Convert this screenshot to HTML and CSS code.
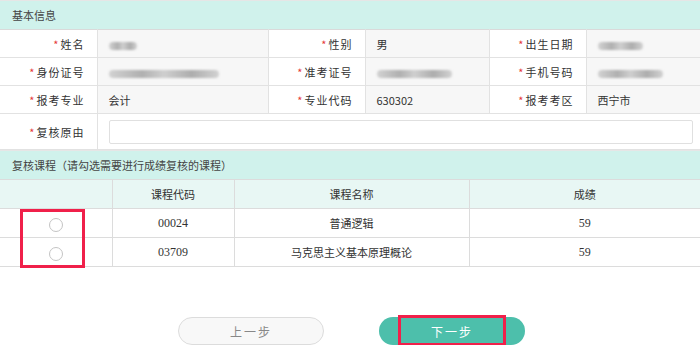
FILE: index.html
```html
<!DOCTYPE html>
<html lang="zh">
<head>
  <meta charset="UTF-8">
  <title>成绩复核申请</title>
  <link rel="stylesheet" href="styles.css">
</head>
<body>
  <div class="title">基本信息</div>
  <table class="info">
    <colgroup>
      <col class="c-l"><col class="c-v1"><col class="c-l"><col class="c-v2"><col class="c-l"><col>
    </colgroup>
    <tr>
      <td class="lbl"><i>*</i>姓名</td>
      <td class="val"><span class="blur w30"></span></td>
      <td class="lbl"><i>*</i>性别</td>
      <td class="val">男</td>
      <td class="lbl"><i>*</i>出生日期</td>
      <td class="val"><span class="blur w45"></span></td>
    </tr>
    <tr>
      <td class="lbl"><i>*</i>身份证号</td>
      <td class="val"><span class="blur w110"></span></td>
      <td class="lbl"><i>*</i>准考证号</td>
      <td class="val"><span class="blur w75"></span></td>
      <td class="lbl"><i>*</i>手机号码</td>
      <td class="val"><span class="blur w65"></span></td>
    </tr>
    <tr>
      <td class="lbl"><i>*</i>报考专业</td>
      <td class="val">会计</td>
      <td class="lbl"><i>*</i>专业代码</td>
      <td class="val">630302</td>
      <td class="lbl"><i>*</i>报考考区</td>
      <td class="val">西宁市</td>
    </tr>
    <tr class="reason">
      <td class="lbl"><i>*</i>复核原由</td>
      <td colspan="5"><input type="text" class="reason-input"></td>
    </tr>
  </table>

  <div class="title">复核课程（请勾选需要进行成绩复核的课程）</div>
  <div class="course-wrap">
    <table class="courses">
      <colgroup>
        <col class="k0"><col class="k1"><col class="k2"><col>
      </colgroup>
      <tr class="head">
        <th></th>
        <th>课程代码</th>
        <th>课程名称</th>
        <th>成绩</th>
      </tr>
      <tr>
        <td><span class="radio"></span></td>
        <td class="num">00024</td>
        <td>普通逻辑</td>
        <td class="num">59</td>
      </tr>
      <tr>
        <td><span class="radio"></span></td>
        <td class="num">03709</td>
        <td>马克思主义基本原理概论</td>
        <td class="num">59</td>
      </tr>
    </table>
    <div class="mark mark-radios"></div>
  </div>

  <div class="actions">
    <button class="btn btn-prev">上一步</button>
    <button class="btn btn-next">下一步<span class="mark mark-next"></span></button>
  </div>
</body>
</html>
```

FILE: styles.css
```css
body {
  margin: 0;
  font-family: "Noto Sans CJK SC", "Noto Sans", sans-serif;
  font-size: 11px;
  color: #333;
  background: #fff;
}
.title {
  height: 28px;
  line-height: 28px;
  padding-left: 12px;
  background: #d0f2ec;
  border-top: 1px solid #e6e6e6;
  color: #444;
}
table {
  width: 700px;
  border-collapse: collapse;
  table-layout: fixed;
}
.info td {
  height: 27px;
  padding: 0;
  border: 1px solid #e2e2e2;
}
.info tr:first-child td { border-top-color: #dadada; }
.info td:first-child { border-left: none; }
.info td:last-child { border-right: none; }
.c-l { width: 97px; }
.c-v1 { width: 171px; }
.c-v2 { width: 124px; }
.lbl {
  text-align: right;
  padding-right: 12px !important;
  background: #fff;
  letter-spacing: 1px;
}
.lbl i {
  font-style: normal;
  color: #e53935;
  margin-right: 1px;
}
.val {
  background: #f7f7f7;
  padding-left: 11px !important;
}
.blur {
  display: inline-block;
  height: 8px;
  vertical-align: middle;
  background: linear-gradient(90deg, #d2d2d2, #b0b0b0 30%, #cfcfcf 50%, #adadad 75%, #d2d2d2);
  border-radius: 4px;
  filter: blur(1px);
}
.w30 { width: 28px; }
.w45 { width: 45px; }
.w65 { width: 65px; }
.w75 { width: 75px; }
.w110 { width: 110px; }
.reason td { height: 35px; }
.reason-input {
  display: block;
  box-sizing: border-box;
  width: 584px;
  height: 24px;
  margin-left: 11px;
  border: 1px solid #e0e0e0;
  border-radius: 2px;
  background: #fff;
}
.course-wrap { position: relative; }
.courses th,
.courses td {
  height: 28px;
  padding: 0;
  text-align: center;
  border: 1px solid #dcdcdc;
  font-weight: normal;
}
.courses th:first-child, .courses td:first-child { border-left: none; }
.courses th:last-child, .courses td:last-child { border-right: none; }
.courses .head th { background: #e8f7f4; }
.k0 { width: 112px; }
.k1 { width: 122px; }
.k2 { width: 235px; }
.num { font-family: "Liberation Serif", serif; font-size: 12px; }
.radio {
  display: inline-block;
  width: 12px;
  height: 12px;
  border: 1px solid #c4c4c4;
  border-radius: 50%;
  vertical-align: middle;
}
.mark {
  position: absolute;
  border: 3px solid #f0204a;
  box-sizing: border-box;
}
.mark-radios {
  left: 20px;
  top: 30px;
  width: 65px;
  height: 59px;
}
.actions {
  display: flex;
  justify-content: center;
  gap: 55px;
  margin-top: 50px;
  padding-left: 3px;
}
.btn {
  position: relative;
  width: 146px;
  height: 28px;
  border-radius: 14px;
  font-family: inherit;
  font-size: 12px;
  letter-spacing: 2px;
  cursor: pointer;
}
.btn-prev {
  background: #f8f8f8;
  border: 1px solid #dcdcdc;
  color: #888;
}
.btn-next {
  background: #4dbfab;
  border: none;
  color: #fff;
}
.mark-next {
  left: 19px;
  top: -2px;
  width: 108px;
  height: 31px;
}
```
